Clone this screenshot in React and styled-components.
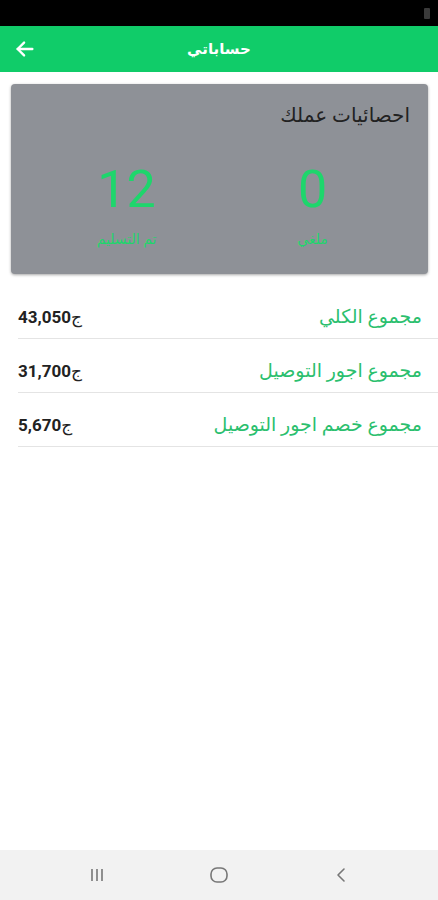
import React from 'react';
import styled, { createGlobalStyle } from 'styled-components';

const Global = createGlobalStyle`
  html, body {
    margin: 0;
    padding: 0;
    background: #ffffff;
  }
  body {
    font-family: Roboto, "DejaVu Sans", sans-serif;
  }
`;

const Screen = styled.div`
  width: 438px;
  height: 900px;
  display: flex;
  flex-direction: column;
  background: #ffffff;
`;

const StatusBar = styled.div`
  height: 26px;
  background: #000000;
  display: flex;
  justify-content: flex-end;
  align-items: center;
  padding-right: 8px;
`;

const Battery = styled.div`
  width: 6px;
  height: 11px;
  border-radius: 1px;
  background: #3a3a3a;
`;

const AppBar = styled.div`
  height: 46px;
  background: #10cc69;
  display: flex;
  align-items: center;
  position: relative;
  justify-content: center;
`;

const BackButton = styled.div`
  position: absolute;
  left: 14px;
  top: 12px;
  width: 22px;
  height: 22px;
  display: flex;
`;

const Title = styled.div`
  color: #ffffff;
  font-weight: 700;
  font-size: 15px;
  direction: rtl;
`;

const Content = styled.div`
  flex: 1;
  display: flex;
  flex-direction: column;
  padding-top: 12px;
`;

const Card = styled.div`
  margin: 0 10px 0 11px;
  height: 190px;
  box-sizing: border-box;
  background: #8e9197;
  border-radius: 4px;
  box-shadow: 0 1px 3px rgba(0, 0, 0, 0.35);
  direction: rtl;
  padding: 18px 18px 0 18px;
  display: flex;
  flex-direction: column;
`;

const CardTitle = styled.div`
  color: #222222;
  font-size: 20px;
  line-height: 26px;
`;

const Stats = styled.div`
  display: grid;
  grid-template-columns: 186px 186px;
  justify-content: center;
  margin-top: 32px;
`;

const Stat = styled.div`
  display: flex;
  flex-direction: column;
  align-items: center;
`;

const StatNumber = styled.div`
  color: #1ed66c;
  font-size: 52px;
  line-height: 60px;
  font-family: Roboto, sans-serif;
`;

const StatLabel = styled.div`
  color: #1ed66c;
  font-size: 14px;
  margin-top: 11px;
`;

const List = styled.div`
  display: flex;
  flex-direction: column;
  margin-top: 11px;
  padding-left: 18px;
`;

const Row = styled.div`
  height: 54px;
  box-sizing: border-box;
  border-bottom: 1px solid #e4e4e4;
  display: flex;
  justify-content: space-between;
  align-items: center;
  padding-right: 16px;
  padding-top: 10px;
`;

const Amount = styled.div`
  font-weight: 700;
  font-size: 17px;
  color: #222222;
  display: flex;
  align-items: center;
`;

const Currency = styled.span`
  font-weight: 400;
  font-size: 17px;
`;

const RowLabel = styled.div`
  color: #2bbf6e;
  font-size: 19px;
  direction: rtl;
`;

const NavBar = styled.div`
  height: 50px;
  background: #f2f2f2;
  display: flex;
  align-items: center;
  justify-content: center;
  gap: 92px;
`;

const NavIcon = styled.div`
  width: 30px;
  display: flex;
  justify-content: center;
`;

const rows = [
  { label: 'مجموع الكلي', value: '43,050' },
  { label: 'مجموع اجور التوصيل', value: '31,700' },
  { label: 'مجموع خصم اجور التوصيل', value: '5,670' },
];

export default function App() {
  return (
    <Screen>
      <Global />
      <StatusBar>
        <Battery />
      </StatusBar>
      <AppBar>
        <BackButton>
          <svg width="22" height="22" viewBox="0 0 24 24" fill="none" stroke="#fff" strokeWidth="2.6" strokeLinecap="round" strokeLinejoin="round">
            <path d="M20 12H4" />
            <path d="M11 5l-7 7 7 7" />
          </svg>
        </BackButton>
        <Title>حساباتي</Title>
      </AppBar>
      <Content>
        <Card>
          <CardTitle>احصائيات عملك</CardTitle>
          <Stats>
            <Stat>
              <StatNumber>0</StatNumber>
              <StatLabel>ملغي</StatLabel>
            </Stat>
            <Stat>
              <StatNumber>12</StatNumber>
              <StatLabel>تم التسليم</StatLabel>
            </Stat>
          </Stats>
        </Card>
        <List>
          {rows.map(r => (
            <Row key={r.label}>
              <Amount>
                {r.value}
                <Currency>ج</Currency>
              </Amount>
              <RowLabel>{r.label}</RowLabel>
            </Row>
          ))}
        </List>
      </Content>
      <NavBar>
        <NavIcon>
          <svg width="18" height="16" viewBox="0 0 18 16" stroke="#777" strokeWidth="1.6">
            <path d="M4 2v12M9 2v12M14 2v12" />
          </svg>
        </NavIcon>
        <NavIcon>
          <svg width="20" height="18" viewBox="0 0 20 18" fill="none" stroke="#777" strokeWidth="1.6">
            <rect x="2" y="2" width="16" height="14" rx="6" />
          </svg>
        </NavIcon>
        <NavIcon>
          <svg width="14" height="18" viewBox="0 0 14 18" fill="none" stroke="#777" strokeWidth="1.6" strokeLinecap="round" strokeLinejoin="round">
            <path d="M10 3L4 9l6 6" />
          </svg>
        </NavIcon>
      </NavBar>
    </Screen>
  );
}
